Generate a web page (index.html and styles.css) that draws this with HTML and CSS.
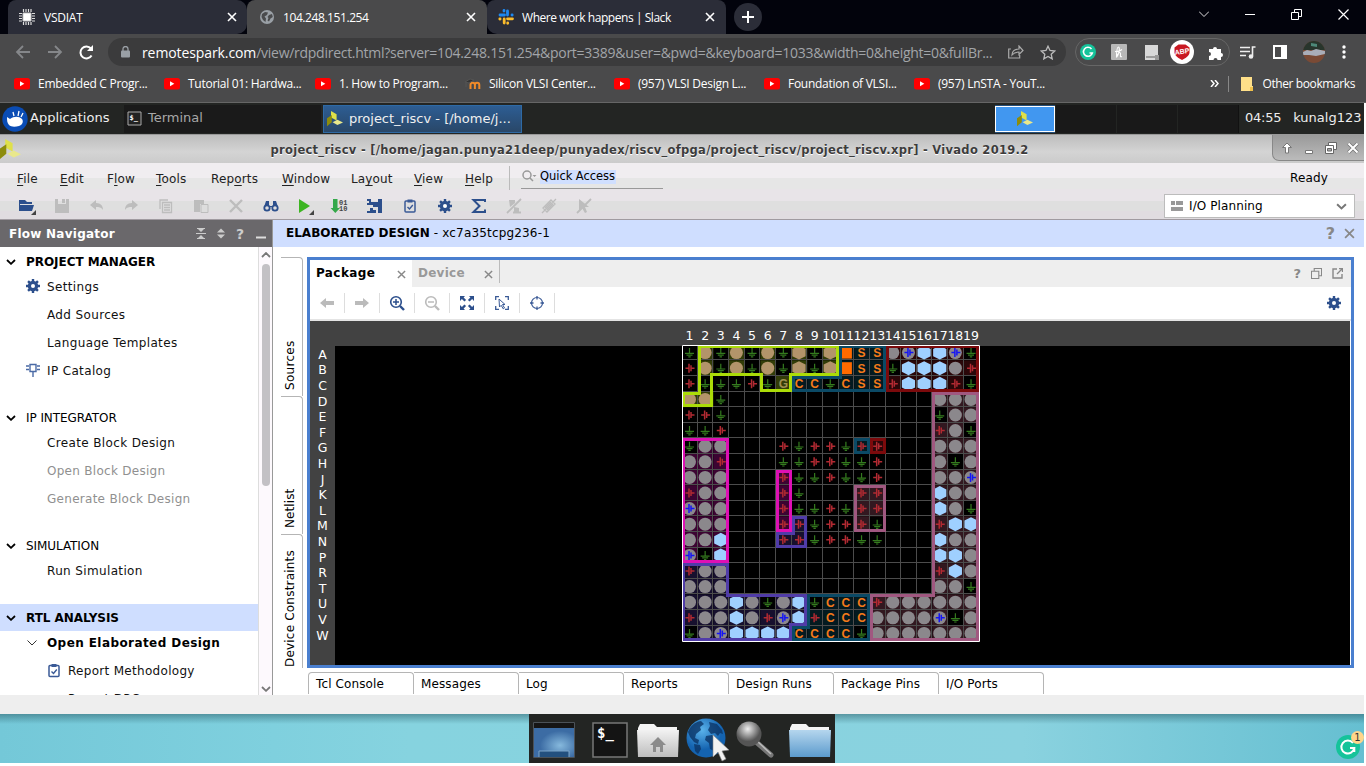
FILE: index.html
```html
<!DOCTYPE html>
<html lang="en">
<head>
<meta charset="utf-8">
<title>104.248.151.254</title>
<link rel="stylesheet" href="styles.css">
</head>
<body>
<svg class="defs" width="0" height="0">
  <symbol id="yt" viewBox="0 0 16 12"><rect width="16" height="11.5" rx="2.5" fill="#f00"/><path d="M6 3.3v5l4.3-2.5z" fill="#fff"/></symbol>
  <symbol id="x" viewBox="0 0 10 10"><path d="M1 1l8 8M9 1L1 9" fill="none" stroke="currentColor" stroke-width="1.6"/></symbol>
  <symbol id="gear" viewBox="0 0 14 14"><path d="M5.8 0h2.4v14H5.8zM0 5.8h14v2.4H0z" fill="#2c4f8c"/><path d="M5.8 0h2.4v14H5.8zM0 5.8h14v2.4H0z" fill="#2c4f8c" transform="rotate(45 7 7)"/><circle cx="7" cy="7" r="3.6" fill="none" stroke="#2c4f8c" stroke-width="3.2"/><circle cx="7" cy="7" r="2" fill="#fff"/></symbol>
  <symbol id="clip" viewBox="0 0 12 15"><rect x="1" y="2.5" width="10" height="11" rx="1" fill="none" stroke="#3a5a96" stroke-width="1.5"/><path d="M3.5 1h5v3h-5z" fill="#3a5a96"/><path d="M3.5 8.5l2 2 3.3-4" fill="none" stroke="#3a5a96" stroke-width="1.4"/></symbol>
  <symbol id="viv" viewBox="0 0 20 20"><path d="M5 0l7 4v8L5 8z" fill="#dfe04a"/><path d="M0 9l6-4v9l-6 5z" fill="#8d8c0c"/><path d="M7 14l6-3 7 3.5-7 3z" fill="#e9e88c"/></symbol>
  <symbol id="chev" viewBox="0 0 10 6"><path d="M1 1l4 3.8L9 1" fill="none" stroke="currentColor" stroke-width="1.8"/></symbol>
  <symbol id="win" viewBox="0 0 12 12"><path d="M3.5 3.5v-3h8v8h-3M.5 3.5h8v8h-8z" fill="none" stroke="currentColor" stroke-width="1.2"/></symbol>
  <symbol id="lens" viewBox="0 0 16 16"><circle cx="7" cy="7" r="5.3" fill="none" stroke="currentColor" stroke-width="1.6"/><path d="M11 11l4 4" stroke="currentColor" stroke-width="2.4"/></symbol>
  <symbol id="arrow" viewBox="0 0 14 10"><path d="M0 5l6-5v3h8v4H6v3z" fill="currentColor"/></symbol>
</svg>

<header class="tabs">
  <div class="tab first"><svg width="16" height="16" viewBox="0 0 16 16"><path d="M4 4h8v8H4z" fill="#fff" stroke="#ccc"/><path d="M4.5 0v3M7 0v3M9.5 0v3M12 0v3M4.5 13v3M7 13v3M9.5 13v3M12 13v3M0 4.5h3M0 7h3M0 9.5h3M0 12h3M13 4.5h3M13 7h3M13 9.5h3M13 12h3" stroke="#ddd" stroke-width="1.2"/></svg><span>VSDIAT</span><svg class="close" width="10" height="10"><use href="#x"/></svg></div>
  <div class="tab active"><svg width="14" height="14" viewBox="0 0 14 14"><circle cx="7" cy="7" r="7" fill="#9aa0a6"/><path d="M2 4l3-2 3 .5L7 5 4.500 6.500 6 8.500 5.500 12 3 10 1.500 7zM9 5l3-1 .8 3-2.300 1.500-1.500 3-1.500-1L8.500 8 7.500 7z" fill="#4a4b4d"/></svg><span>104.248.151.254</span><svg class="close" width="10" height="10"><use href="#x"/></svg></div>
  <div class="tab last"><svg width="16" height="16" viewBox="0 0 16 16" stroke-width="2.800" stroke-linecap="round"><path d="M6 1.500v.5M2 6h4.500M9.500 2v4M14 6h.2" stroke="#1e88f0"/><path d="M9.500 9.800h5M6.200 10v4M9.700 14v.3M1.800 10h.3" stroke="#fbbc2c"/></svg><span>Where work happens | Slack</span><svg class="close" width="10" height="10"><use href="#x"/></svg></div>
  <div class="plus"><svg width="12" height="12"><path d="M6 0v12M0 6h12" stroke="#fff" stroke-width="2"/></svg></div>
  <div class="wbtns">
    <svg width="10" height="6" viewBox="0 0 10 6"><path d="M0 .5l5 5 5-5" fill="none" stroke="#ddd"/></svg>
    <svg width="10" height="10"><path d="M0 5.500h10" stroke="#fff"/></svg>
    <svg width="11" height="11"><path d="M3.500 3V.5h7v7H8M.5 3.500h7v7h-7z" fill="none" stroke="#fff"/></svg>
    <svg width="11" height="11"><path d="M.5.5l10 10M10.500 .5l-10 10" stroke="#fff" stroke-width="1.200"/></svg>
  </div>
</header>

<div class="urlbar">
  <div class="nav">
    <svg width="16" height="14" viewBox="0 0 16 14"><path d="M15 7H2M8 1L2 7l6 6" fill="none" stroke="#85878a" stroke-width="1.8"/></svg>
    <svg width="16" height="14" viewBox="0 0 16 14"><path d="M1 7h13M8 1l6 6-6 6" fill="none" stroke="#85878a" stroke-width="1.8"/></svg>
    <svg width="15" height="15" viewBox="0 0 15 15"><path d="M12.600 10.500A6 6 0 1 1 12 3.500" fill="none" stroke="#fff" stroke-width="2"/><path d="M14 0v6H8z" fill="#fff"/></svg>
  </div>
  <div class="omni">
    <svg width="9" height="12" viewBox="0 0 9 12"><rect y="4.500" width="9" height="7" rx="1" fill="#9aa0a6"/><path d="M2 5V3a2.500 2.500 0 0 1 5 0v2" fill="none" stroke="#9aa0a6" stroke-width="1.300"/></svg>
    <p class="url"><b>remotespark.com</b>/view/rdpdirect.html?server=104.248.151.254&amp;port=3389&amp;user=&amp;pwd=&amp;keyboard=1033&amp;width=0&amp;height=0&amp;fullBr...</p>
    <svg class="share" width="16" height="14" viewBox="0 0 16 14"><path d="M3 4H.7v9h11v-3M4 10c0-4 3-6 7-6V1l4 4.500-4 4V7c-3 0-5 .5-7 3z" fill="none" stroke="#aaa" stroke-width="1.200"/></svg>
    <svg class="star" width="16" height="15" viewBox="0 0 16 15"><path d="M8 1.200l2 4.300 4.700.5-3.500 3.200 1 4.700L8 11.500l-4.200 2.400 1-4.700L1.300 6 6 5.500z" fill="none" stroke="#bbb" stroke-width="1.300"/></svg>
  </div>
  <div class="exts">
    <svg width="16" height="16" viewBox="0 0 16 16"><circle cx="8" cy="8" r="8" fill="#15c39a"/><path d="M11.500 5A4.500 4.500 0 1 0 12.300 9H9.500" fill="none" stroke="#fff" stroke-width="1.600"/></svg>
    <svg width="16" height="16" viewBox="0 0 16 16"><rect width="16" height="16" rx="1" fill="#b8b8b8"/><path d="M5.500 13.500c3-4 3.500-10.500 2-10.500S5.500 8 5.500 13.500c1-4.500 4-6.500 4-3.500 0 2-.5 3.500 1.500 2.500M4 7.500c3 .5 5-.5 7-2" fill="none" stroke="#fff" stroke-width="1.100"/></svg>
    <svg class="page" width="14" height="15" viewBox="0 0 14 15"><path d="M0 0h13v15H0z" fill="#d8d8d8"/><path d="M1 12h9" stroke="#888" stroke-width="1.500"/><path d="M10 10h4v5h-4z" fill="#999"/></svg>
    <svg width="24" height="24" viewBox="0 0 24 24"><circle cx="12" cy="12" r="12" fill="#fff"/><path d="M8.500 4.500h7l4 3v5c0 3-4 6-7.500 7.500-3.500-1.500-7.500-4.500-7.500-7.500v-5z" fill="#c91822"/><text x="12" y="14" text-anchor="middle" class="abp" transform="rotate(-8 12 12)">ABP</text></svg>
    <svg width="15" height="15" viewBox="0 0 15 15"><path d="M0 4h4a2 2 0 1 1 4 0h4v4a2 2 0 1 1 0 4v3H8.500a2 2 0 1 0-4 0H0v-4a2 2 0 1 0 0-4z" fill="#fff"/></svg>
  </div>
  <div class="rtools">
    <svg width="16" height="13" viewBox="0 0 16 13"><path d="M0 1.500h10M0 5.500h10M0 9.500h6M12.500 10V1h3" fill="none" stroke="#eee" stroke-width="1.600"/><circle cx="11" cy="10.500" r="2.300" fill="#eee"/></svg>
    <svg width="14" height="14"><path d="M1 1h12v12H1z" fill="none" stroke="#fff" stroke-width="2"/><path d="M8 1h5v12H8z" fill="#fff"/></svg>
    <svg width="22" height="22" viewBox="0 0 22 22"><clipPath id="av"><circle cx="11" cy="11" r="11"/></clipPath><g clip-path="url(#av)"><path d="M0 0h22v22H0z" fill="#7a4a35"/><path d="M0 0h22v9H0z" fill="#28352c"/><path d="M0 11l4-2 4 1 5-2 9 2v3l-9 2-7-1H0z" fill="#a9adb8"/><path d="M8 2l6 1v3l-6-1z" fill="#4d8878"/></g></svg>
    <svg width="4" height="14"><circle cx="2" cy="2" r="1.700" fill="#fff"/><circle cx="2" cy="7" r="1.700" fill="#fff"/><circle cx="2" cy="12" r="1.700" fill="#fff"/></svg>
  </div>
</div>

<nav class="marks">
  <a class="m1"><svg width="16" height="12"><use href="#yt"/></svg>Embedded C Progr...</a>
  <a class="m2"><svg width="16" height="12"><use href="#yt"/></svg>Tutorial 01: Hardwa...</a>
  <a class="m2"><svg width="16" height="12"><use href="#yt"/></svg>1. How to Program...</a>
  <a class="m3"><svg width="16" height="12" viewBox="0 0 16 12"><path d="M5.500 11V7a2.200 2.200 0 0 1 4.400 0v4V7a2.200 2.200 0 0 1 4.400 0v4" fill="none" stroke="#f08a28" stroke-width="2"/><path d="M0 4l5-3 4 1-5 3zM1 5v4" fill="#333" stroke="#555"/></svg>Silicon VLSI Center...</a>
  <a class="m4"><svg width="16" height="12"><use href="#yt"/></svg>(957) VLSI Design L...</a>
  <a class="m4"><svg width="16" height="12"><use href="#yt"/></svg>Foundation of VLSI...</a>
  <a><svg width="16" height="12"><use href="#yt"/></svg>(957) LnSTA - YouT...</a>
  <div class="other"><svg width="9" height="7" viewBox="0 0 9 7"><path d="M1 0l3 3.500L1 7M5 0l3 3.500L5 7" fill="none" stroke="#fff" stroke-width="1.500"/></svg><i></i><svg class="fold" width="12" height="14"><path d="M0 0h11v9h1v5H0z" fill="#ffe089"/><path d="M9 14v-4h3v4z" fill="#f2c24a"/></svg>Other bookmarks</div>
</nav>

<div class="remote">
  <div class="xfce">
    <div class="apps"><svg width="26" height="26" viewBox="0 0 26 26"><circle cx="13" cy="13" r="12.700" fill="#0a4cb4"/><path d="M5 11l3 2c4-3 9-3 12 0 2 3 0 6-3 7-4 1-8 1-10-1-2-2-2-5-2-8z" fill="#fff"/><path d="M12 10l-1-4M16 10l1-5M19 11l2-4" stroke="#fff" stroke-width="1.300"/></svg><span>Applications</span></div>
    <div class="task"><svg width="15" height="15"><path d="M1 1h13v13H1z" fill="#222" stroke="#aaa"/><text x="2.500" y="8.500" class="prompt">$_</text></svg><span>Terminal</span></div>
    <div class="task on"><svg width="16" height="16"><use href="#viv"/></svg>project_riscv - [/home/j...</div>
    <div class="pager"><b><svg width="16" height="16"><use href="#viv"/></svg></b><i></i><i></i><i></i></div>
    <time>04:55</time><span class="user">kunalg123</span>
  </div>

  <div class="title">
    <svg class="logo" width="21" height="21"><use href="#viv"/></svg>
    <h1>project_riscv - [/home/jagan.punya21deep/punyadex/riscv_ofpga/project_riscv/project_riscv.xpr] - Vivado 2019.2</h1>
    <div class="wm">
      <svg width="12" height="12" viewBox="0 0 12 12"><path d="M6 1l4.500 4.500h-3V11h-3V5.500h-3z" fill="#fff" stroke="#777"/></svg>
      <svg width="12" height="12"><path d="M2.500 8.500h7v3h-7z" fill="#fff" stroke="#777"/></svg>
      <svg width="12" height="12"><path d="M3.500 .5h8v7h-8z" fill="#fff" stroke="#666"/><path d="M.5 3.500h8v8h-8z" fill="#fff" stroke="#666"/><path d="M2.500 6.500h4v2.500h-4z" fill="#aaa" stroke="#666"/></svg>
      <svg width="12" height="12"><path d="M1.500 1.500l9 9M10.500 1.500l-9 9" stroke="#777" stroke-width="3.600"/><path d="M1.500 1.500l9 9M10.500 1.500l-9 9" stroke="#fff" stroke-width="2"/></svg>
    </div>
  </div>

  <div class="chrome">
    <div class="menu">
      <span class="w43"><u>F</u>ile</span><span class="w47"><u>E</u>dit</span><span class="w49">F<u>l</u>ow</span><span class="w55"><u>T</u>ools</span><span class="w71">Rep<u>o</u>rts</span><span class="w69"><u>W</u>indow</span><span class="w63">La<u>y</u>out</span><span class="w51"><u>V</u>iew</span><span class="w44"><u>H</u>elp</span>
      <div class="quick"><svg width="15" height="12" viewBox="0 0 15 12"><circle cx="5" cy="5" r="4" fill="none" stroke="#999" stroke-width="1.500"/><path d="M8 8l3 3" stroke="#999" stroke-width="1.500"/><path d="M10.500 5h4l-2 2z" fill="#999"/></svg><span>Quick Access</span></div>
      <span class="ready">Ready</span>
    </div>
    <div class="tools">
      <svg viewBox="0 0 20 20"><path d="M3 4h5l2 2h5v2H3zM3 9h14l-2 6H3z" fill="#2c4f8c"/><path d="M2.500 4v11" stroke="#2c4f8c"/><path d="M19 14v5h-5z" fill="#444"/></svg>
      <svg class="dim" viewBox="0 0 20 20"><path d="M3 3h3v5h8V3h3v14H3z" fill="currentColor"/><path d="M10 3h3v4h-3z" fill="currentColor"/></svg>
      <svg class="dim" viewBox="0 0 20 20"><path d="M3 9l6-5v3c5 0 7 3 7 7-2-3-4-3-7-3v3z" fill="currentColor"/></svg>
      <svg class="dim" viewBox="0 0 20 20"><path d="M17 9l-6-5v3c-5 0-7 3-7 7 2-3 4-3 7-3v3z" fill="currentColor"/></svg>
      <svg class="dim" viewBox="0 0 20 20"><path d="M4 13V4h8M6.500 6.500h9v10h-9zM8 9h6M8 11.500h6M8 14h6" fill="none" stroke="currentColor" stroke-width="1.300"/></svg>
      <svg class="dim" viewBox="0 0 20 20"><path d="M3 4h10v4H9v8H3z" fill="currentColor"/><path d="M10 8.500h7v8h-7z" fill="#ddd" stroke="currentColor"/></svg>
      <svg class="dim" viewBox="0 0 20 20"><path d="M4 4l12 12M16 4L4 16" stroke="currentColor" stroke-width="2.400"/></svg>
      <svg viewBox="0 0 20 20"><path d="M5 5h3v5h4V5h3l2 6H3z" fill="#2c4f8c"/><circle cx="6" cy="12" r="2.700" fill="#ddd" stroke="#2c4f8c" stroke-width="1.800"/><circle cx="14" cy="12" r="2.700" fill="#ddd" stroke="#2c4f8c" stroke-width="1.800"/></svg>
      <svg viewBox="0 0 20 20"><path d="M4 3l11 7-11 7z" fill="#3cb521"/><path d="M19 14v5h-5z" fill="#444"/></svg>
      <svg viewBox="0 0 20 20"><path d="M3 3h4.500v9H10l-4.700 5L.6 12H3z" fill="#35a84a"/><text x="9" y="8.500" class="bits">01</text><text x="9" y="15" class="bits">10</text></svg>
      <svg viewBox="0 0 20 20"><path d="M2 3h4v3h7V3h4v14h-4v-6H8v3h3v3H2v-2h3v-3h3V9H2V7h2V5H2z" fill="#2c4f8c"/></svg>
      <svg viewBox="-3 -2.500 18 20"><use href="#clip" width="12" height="15"/></svg>
      <svg viewBox="-3 -3 20 20"><use href="#gear" width="14" height="14"/></svg>
      <svg viewBox="0 0 20 20"><path d="M16 6V4H4.500l6 6-6 6H16v-2.500" fill="none" stroke="#2c4f8c" stroke-width="2"/></svg>
      <svg class="dim" viewBox="0 0 20 20"><path d="M5 4h6v3l-5 4zM10 11l5 1v4h-5zM3 16.500h14" fill="currentColor"/><path d="M3 17L17 3M9 16.500h8" stroke="currentColor" stroke-width="1.800"/></svg>
      <svg class="dim" viewBox="0 0 20 20"><path d="M4 12l8-8 4 4-8 8zM6 12l6-6M8 14l6-6M3 17L17 3" fill="none" stroke="currentColor" stroke-width="1.300"/></svg>
      <svg class="dim" viewBox="0 0 20 20"><path d="M5 3v12l3-3 3 5 2-1-2-5h4z" fill="currentColor"/><path d="M3 17L17 3" stroke="currentColor" stroke-width="1.800"/></svg>
      <div class="combo"><svg width="12" height="10"><path d="M0 0h4v4H0zM5 0h7v4H5zM0 6h12v4H0z" fill="#999"/></svg><span>I/O Planning</span><svg class="cv" width="11" height="7"><use href="#chev"/></svg></div>
    </div>
  </div>

  <main class="work">
    <aside class="flow">
      <div class="flowhead"><span>Flow Navigator</span>
        <svg width="10" height="11"><path d="M0 5.500h10M1 .5h8M1 10.500h8" stroke="#ccc"/><path d="M2 1h6L5 4zM2 10h6L5 7z" fill="#ccc"/></svg>
        <svg width="10" height="11"><path d="M1 4.500h8L5 .5zM1 6.500h8l-4 4z" fill="#ccc"/></svg>
        <b>?</b>
        <svg width="11" height="11"><path d="M0 9.500h10" stroke="#ddd" stroke-width="2"/></svg></div>
      <div class="flowbody">
        <div class="tree">
          <h2><svg width="10" height="6"><use href="#chev"/></svg>PROJECT MANAGER</h2>
          <p><svg width="14" height="14"><use href="#gear"/></svg>Settings</p>
          <p>Add Sources</p>
          <p>Language Templates</p>
          <p><svg width="14" height="14" viewBox="0 0 14 14"><path d="M4 1.500h6v7H4zM0 3h3M0 6.500h3M11 3h3M11 6.500h3M7 9v5" fill="none" stroke="#4a6aa5" stroke-width="1.400"/></svg>IP Catalog</p>
          <h2 class="thin"><svg width="10" height="6"><use href="#chev"/></svg>IP INTEGRATOR</h2>
          <p>Create Block Design</p>
          <p class="off">Open Block Design</p>
          <p class="off">Generate Block Design</p>
          <h2 class="thin"><svg width="10" height="6"><use href="#chev"/></svg>SIMULATION</h2>
          <p>Run Simulation</p>
          <h2 class="sel"><svg width="10" height="6"><use href="#chev"/></svg>RTL ANALYSIS</h2>
          <p class="open"><svg width="10" height="6" viewBox="0 0 10 6"><path d="M.5.5L5 5 9.500.5" fill="none" stroke="#333"/></svg>Open Elaborated Design</p>
          <p class="sub"><svg width="12" height="15"><use href="#clip"/></svg>Report Methodology</p>
          <p class="sub">Report DRC</p>
        </div>
        <div class="scroll"><svg width="10" height="6" viewBox="0 0 10 6"><path d="M1 5l4-4 4 4" fill="none" stroke="#777" stroke-width="1.800"/></svg><i></i><svg width="10" height="6"><use href="#chev"/></svg></div>
      </div>
    </aside>

    <section class="design">
      <div class="dhead"><b>ELABORATED DESIGN</b><span>- xc7a35tcpg236-1</span><em>?</em><svg width="11" height="11"><use href="#x"/></svg></div>
      <div class="dbody">
        <div class="vtabs"><span class="v1">Sources</span><span class="v2">Netlist</span><span class="v3">Device Constraints</span></div>
        <div class="col">
          <div class="panel">
            <div class="ptabs"><div class="pt on">Package<svg width="9" height="9"><use href="#x"/></svg></div><div class="pt">Device<svg width="9" height="9"><use href="#x"/></svg></div>
              <div class="pbtn"><em>?</em><svg width="11" height="11"><use href="#win"/></svg><svg width="11" height="11" viewBox="0 0 11 11"><path d="M5 1H1v9h9V6" fill="none" stroke="#888" stroke-width="1.400"/><path d="M5 6l5-5M7 .7h3.500V4" fill="none" stroke="#888" stroke-width="1.300"/></svg></div></div>
            <div class="ptools">
              <span class="dim"><svg width="14" height="10"><use href="#arrow"/></svg></span>
              <span class="dim flip"><svg width="14" height="10"><use href="#arrow"/></svg></span>
              <span><svg width="16" height="16" viewBox="0 0 16 16"><use href="#lens"/><path d="M7 4v6M4 7h6" stroke="#2c4f8c" stroke-width="1.500"/></svg></span>
              <span class="dim"><svg width="16" height="16" viewBox="0 0 16 16"><use href="#lens"/><path d="M4 7h6" stroke="#bbb" stroke-width="1.500"/></svg></span>
              <span><svg width="14" height="14" viewBox="0 0 14 14"><path d="M0 0h5L3.600 1.400l2.500 2.500-1.700 1.700L1.900 3.100 0 5zM14 0v5l-1.900-1.900-2.500 2.500L7.900 3.900l2.500-2.500L9 0zM0 14V9l1.900 1.900 2.500-2.500 1.700 1.700-2.500 2.500L5 14zM14 14H9l1.400-1.400-2.500-2.500 1.700-1.700 2.500 2.500L14 9z" fill="#2c4f8c"/></svg></span>
              <span><svg width="14" height="14" viewBox="0 0 14 14"><path d="M.7 4V.7H4M10 .7h3.300V4M13.300 10v3.300H10M4 13.300H.7V10" fill="none" stroke="#3a5a96" stroke-width="1.300"/><path d="M4 3l6 5.500H7.500l2 3.500-1.300.8-2-3.500L4.500 11z" fill="none" stroke="#3a5a96"/></svg></span>
              <span><svg width="14" height="14" viewBox="0 0 14 14"><circle cx="7" cy="7" r="5.500" fill="none" stroke="#3a5a96" stroke-width="1.200"/><path d="M7 0v3.500M7 10.500V14M0 7h3.500M10.500 7H14" stroke="#3a5a96" stroke-width="1.300"/></svg></span>
              <svg class="pgear" width="14" height="14"><use href="#gear"/></svg>
            </div>
            <svg id="chip" class="chip" width="1040" height="344" viewBox="310 321 1040 344"></svg>
          </div>
          <div class="btabs"><span>Tcl Console</span><span>Messages</span><span>Log</span><span>Reports</span><span>Design Runs</span><span>Package Pins</span><span>I/O Ports</span></div>
        </div>
      </div>
    </section>
  </main>
  <div class="status"></div>

  <footer class="desk">
    <div class="dock">
      <svg width="42" height="36" viewBox="0 0 42 36"><defs><radialGradient id="scr" cx=".65" cy=".6"><stop offset="0" stop-color="#86b9dd"/><stop offset="1" stop-color="#3c6ca4"/></radialGradient><linearGradient id="fb" x2="0" y2="1"><stop offset="0" stop-color="#b5d6ee"/><stop offset="1" stop-color="#5c9bcd"/></linearGradient><linearGradient id="fg" x2="0" y2="1"><stop offset="0" stop-color="#f2f2f2"/><stop offset="1" stop-color="#bdbdbd"/></linearGradient><radialGradient id="gl" cx=".4" cy=".3"><stop offset="0" stop-color="#5ab2ea"/><stop offset="1" stop-color="#1463b0"/></radialGradient><radialGradient id="ball" cx=".45" cy=".3"><stop offset="0" stop-color="#eee"/><stop offset="1" stop-color="#555"/></radialGradient></defs><path d="M.5.5h41v35H.5z" fill="#151515" stroke="#4b5258"/><path d="M1 6h40v29H1z" fill="url(#scr)"/><path d="M6 35v-6h30v6" fill="#23507e" stroke="#7fa6c8"/></svg>
      <svg width="36" height="36" viewBox="0 0 36 36"><path d="M1 1h34v34H1z" fill="#141414" stroke="#777" stroke-width="1.500"/><text x="5" y="16" class="prompt big">$_</text></svg>
      <svg width="42" height="36" viewBox="0 0 42 36"><path d="M1 6l2-4h14l3 3h20v30H1z" fill="#f4f4f4"/><path d="M0 8h42l-1 27H1z" fill="url(#fg)"/><path d="M21 15l8 8h-3v7h-3v-5h-4v5h-3v-7h-3z" fill="#8b8b8b"/></svg>
      <svg width="44" height="44" viewBox="0 0 44 44"><circle cx="20" cy="20" r="19.500" fill="url(#gl)"/><path d="M2 14c2-5 6-10 13-11l3 3-4 3 1 3-5 4-1 4 4 2-1 4-4-2-4-5zM8 26l6 1 1 4-3 5-3-3zM23 4l8 2 5 6 1 4-3-1-2 3-3-3-4 1-3-4 2-4zM20 18l6-1 5 4 1 4-4 8-4-2-1-6-4-3z" fill="#0b3566" opacity=".8"/><path d="M27 17v22l5-5 4 9 4-2-4-8 7-1z" fill="#f2f2f2" stroke="#888" stroke-width=".6"/></svg>
      <svg width="40" height="38" viewBox="0 0 40 38"><path d="M20 20l16 14" stroke="#777" stroke-width="5" stroke-linecap="round"/><path d="M21 19l15 14" stroke="#bbb" stroke-width="1.500"/><circle cx="14" cy="13" r="12.500" fill="url(#ball)"/></svg>
      <svg width="42" height="36" viewBox="0 0 42 36"><path d="M1 6l2-4h14l3 3h20v30H1z" fill="#f4f4f4"/><path d="M0 8h42l-1 27H1z" fill="url(#fb)"/></svg>
    </div>
    <div class="gram"><svg width="24" height="24" viewBox="0 0 24 24"><circle cx="12" cy="12" r="12" fill="#15c39a"/><path d="M17 8A6.500 6.500 0 1 0 18.300 13H14M18.300 13v4" fill="none" stroke="#fff" stroke-width="2"/></svg><i>1</i></div>
  </footer>
</div>
<script src="chip.js"></script>
</body>
</html>
```
FILE: styles.css
```css
* { box-sizing: border-box; }
body { margin: 0; width: 1366px; height: 766px; overflow: hidden; background: #fff; font: 12px "DejaVu Sans", sans-serif; }
svg { flex: none; }
.defs { position: absolute; }
p, h1, h2 { margin: 0; }
span, p, h1, h2, a { white-space: nowrap; }

/* browser window */
.tabs { display: flex; height: 34px; padding-left: 8px; background: #02030c; color: #fff; font: 12px "Open Sans", sans-serif; }
.tab { display: flex; align-items: center; height: 34px; width: 240px; padding: 0 11px; background: #2b2d38; border-radius: 8px 8px 0 0; letter-spacing: -.25px; }
.tab.first { width: 239px; padding-right: 10px; border-radius: 8px 10px 10px 0; }
.tab.active { background: #4a4a4b; padding-left: 13px; }
.tab.last { width: 239px; border-radius: 8px 8px 0 10px; letter-spacing: -.45px; }
.tab span { margin-left: 9px; }
.tab.last span { margin-left: 8px; }
.tab.active span { letter-spacing: -.42px; }
.close { margin-left: auto; }
.plus { display: flex; align-items: center; justify-content: center; width: 28px; height: 28px; border-radius: 50%; background: #2b2d38; margin: 3px 0 0 8px; }
.wbtns { display: flex; align-items: center; margin-left: auto; gap: 36px; height: 28px; padding-right: 17px; }
.urlbar { display: flex; align-items: center; height: 35px; padding-top: 1px; background: #4a4a4b; }
.nav { display: flex; align-items: center; gap: 16px; padding-left: 15px; width: 108px; }
.omni { display: flex; align-items: center; width: 958px; height: 28px; padding: 0 10px 0 13px; border-radius: 14px; background: #3b3b3c; }
.url { width: 866px; padding-left: 12px; color: #a2a5a9; font: 14px "Open Sans", sans-serif; letter-spacing: -.27px; }
.url b { font-weight: 400; color: #fff; letter-spacing: -.1px; }
.star { margin-left: 16px; }
.share { margin-left: 12px; }
.exts { display: flex; align-items: center; justify-content: space-between; width: 155px; height: 28px; margin-left: 9px; padding: 0 5px 0 4px; border: 1px solid #666; border-radius: 14px; }
.exts .page { margin: 0 -3px 0 3px; }
.abp { font: bold 7px "Liberation Sans", sans-serif; fill: #fff; }
.rtools { display: flex; align-items: center; justify-content: space-between; width: 106px; margin-left: 10px; }
.marks { display: flex; align-items: center; height: 34px; padding: 0 11px 4px 14px; border-bottom: 1px solid #666; background: #4a4a4b; color: #fff; font: 12px "Open Sans", sans-serif; letter-spacing: -.27px; }
.marks a { display: flex; align-items: center; gap: 8px; width: 150px; }
.marks .m2 { width: 151px; }
.marks .m3 { width: 148px; margin-left: -1px; margin-right: 1px; }
.other { display: flex; align-items: center; margin-left: auto; letter-spacing: -.4px; }
.other i { width: 1px; height: 16px; margin: 0 12px 0 9px; background: #888; }
.fold { margin-right: 9px; }

/* remote desktop */
.remote { width: 1364px; }
.xfce { display: flex; align-items: center; height: 31px; background: #232523; color: #eee; font-size: 13px; }
.apps { display: flex; align-items: center; gap: 2px; width: 124px; padding-left: 2px; height: 29px; }
.apps span, .task span { padding-bottom: 2px; }
.task { display: flex; align-items: center; gap: 6px; height: 28px; width: 197px; padding-left: 3px; background: #1a1a1a; color: #a8a8a8; }
.task.on { width: 199px; margin-left: 2px; gap: 6px; padding-left: 3px; border: 1px solid #2e6aa5; background: linear-gradient(#2d5d93, #294768); color: #f0f0f0; }
.prompt { font: bold 7px "DejaVu Sans Mono", monospace; fill: #fff; }
.prompt.big { font-size: 14px; }
.pager { display: flex; gap: 1px; margin-left: 473px; height: 28px; border-right: 1px solid #111; background: linear-gradient(#254e78, #254e78) 0 0 / 60px 28px no-repeat; }
.pager b { display: flex; align-items: center; justify-content: center; width: 60px; height: 26px; margin-top: 1px; border: 1px solid #fff; background: #4197f0; }
.pager i { width: 60px; background: #191919; }
.pager + time { margin-left: 6px; padding-bottom: 2px; letter-spacing: -.25px; }
.user { margin-left: 12px; padding-bottom: 2px; }
.title { display: flex; align-items: center; justify-content: center; position: relative; height: 29px; padding-top: 2px; border-top: 1px solid #999; background: linear-gradient(#bdbdbd, #d4d4d4 60%, #cbcbcb); }
.title h1 { margin-right: 65px; font-size: 11.500px; letter-spacing: .285px; color: #3c3c3c; text-shadow: 0 1px #fff; }
.logo { position: absolute; left: 0; top: 4px; }
.wm { position: absolute; right: 0; top: 0; display: flex; align-items: center; gap: 10px; width: 92px; height: 26px; padding-left: 8px; border: 1px solid #888; border-width: 0 0 1px 1px; border-radius: 0 0 0 7px; background: linear-gradient(#999, #bbb); }
.chrome { height: 57px; border-bottom: 1px solid #a09aa0; background: linear-gradient(#f0edf0 0 15px, #e6e6e6 15px 26px, #e8e4e8 26px 38px, #dfdfdf 38px 48px, #e0dce0 48px); }
.menu { display: flex; height: 30px; padding: 2px 0 0 17px; align-items: center; color: #222; letter-spacing: .15px; }
.menu u { text-underline-offset: 2px; }
.w43 { width: 43px; } .w47 { width: 47px; } .w49 { width: 49px; } .w55 { width: 55px; } .w71 { width: 71px; } .w69 { width: 69px; } .w63 { width: 63px; } .w51 { width: 51px; } .w44 { width: 44px; }
.quick { display: flex; align-items: center; width: 154px; padding-left: 12px; height: 24px; margin-top: -3px; border-left: 1px solid #bbb; color: #000; font-size: 11.500px; letter-spacing: -.05px; }
.quick svg { margin-bottom: 3px; }
.quick span { display: flex; flex: none; align-items: center; width: 142px; height: 22px; margin-left: -16px; padding: 0 0 3px 19px; border-bottom: 1px solid #999; background: linear-gradient(#d0dfff, #d0dfff) 19px 3px / 76px 14px no-repeat; }
.ready { margin-left: 627px; margin-top: -2px; color: #000; }
.tools { display: flex; height: 26px; padding-left: 17px; align-items: center; }
.tools > svg { width: 20px; height: 20px; margin-right: 14.800px; overflow: visible; }
.dim { color: #bdbdbd; }
.bits { font: bold 7px "Liberation Mono", monospace; fill: #444; }
.combo { display: flex; align-items: center; width: 191px; height: 24px; margin-left: auto; margin-right: 9px; padding: 0 7px 0 6px; border: 1px solid #bcbcbc; background: #fff; letter-spacing: .1px; }
.combo span { margin-left: 6px; }
.cv { margin-left: auto; color: #777; }

.work { display: flex; height: 475px; background: #fff; }
.flow { width: 273px; border-right: 1px solid #999; }
.flowhead { display: flex; align-items: center; height: 27px; padding: 0 5px 0 9px; background: #6a686b; color: #fff; font-weight: bold; letter-spacing: .25px; }
.flowhead span { width: 187px; flex: none; }
.flowhead svg { margin-right: 10px; }
.flowhead svg:last-child { margin: 0 0 0 12px; }
.flowhead b { color: #ccc; font-size: 14px; }
.flowbody { display: flex; height: 448px; overflow: hidden; }
.tree { width: 258px; padding-top: 1px; letter-spacing: .36px; color: #111; }
.tree h2 { display: flex; align-items: center; height: 27px; margin: 20px 0 -3px; padding-left: 6px; gap: 10px; font-size: 12px; letter-spacing: -.05px; color: #000; }
.tree h2:first-child { margin-top: 0; }
.tree h2.thin { font-weight: 400; letter-spacing: -.07px; }
.tree h2.sel { background: #cfdeff; }
.tree p { position: relative; height: 28px; line-height: 30px; padding-left: 47px; }
.tree p svg { position: absolute; left: 26px; top: 7px; }
.tree .off { color: #909090; letter-spacing: .28px; }
.tree .open { font-weight: bold; letter-spacing: .42px; color: #000; }
.tree .open svg { left: 27px; top: 12px; }
.tree .sub { padding-left: 68px; letter-spacing: .3px; }
.tree .sub svg { left: 48px; }
.scroll { display: flex; flex-direction: column; align-items: center; width: 14px; padding: 5px 0 3px; border-left: 1px solid #ddd; background: #fdf9fd; color: #777; }
.scroll i { width: 8px; height: 222px; margin: 6px 0 auto; border-radius: 4px; background: #c3c1c5; }

.design { width: 1091px; }
.dhead { display: flex; align-items: center; height: 27px; padding: 0 9px 1px 13px; background: #cfdeff; color: #000; }
.dhead span { margin-left: 4px; letter-spacing: .17px; }
.dhead em { margin: 0 9px 0 auto; font: bold 16px "DejaVu Sans", sans-serif; color: #888; }
.dhead svg { color: #888; }
.dbody { display: flex; padding: 10px 10px 0 8px; }
.vtabs { width: 22px; margin-right: 4px; padding-top: 0; }
.vtabs span { display: block; writing-mode: vertical-rl; transform: rotate(180deg); width: 22px; line-height: 22px; padding-left: 3px; border-left: 1px solid #b5b5b5; border-bottom: 1px solid #b5b5b5; border-radius: 0 0 0 4px; letter-spacing: .1px; padding-top: 6px; }
.vtabs .v1, .vtabs .v2, .vtabs .v3 { line-height: 18px; }
.vtabs .v1 { height: 139px; padding-top: 6px; letter-spacing: .3px; }
.v2 { height: 138px; }
.vtabs .v3 { height: 134px; padding-top: 1px; letter-spacing: .2px; }
.panel { width: 1047px; height: 411px; border: 3px solid #4a7fcf; }
.ptabs { display: flex; height: 27px; background: #eee; }
.pt { display: flex; align-items: center; justify-content: space-between; width: 88px; height: 23px; padding: 2px 6px 0 6px; border-right: 1px solid #bbb; color: #999; font-weight: bold; letter-spacing: .25px; }
.pt.on { width: 102px; height: 27px; padding: 0 6px 2px; border: 0; background: #fff; color: #000; letter-spacing: .4px; }
.pt svg { color: #888; margin-top: 3px; }
.pbtn { display: flex; align-items: center; gap: 10px; margin-left: auto; padding-right: 8px; color: #888; }
.pbtn em { font: bold 13px "DejaVu Sans", sans-serif; }
.ptools { display: flex; align-items: center; height: 34px; border-bottom: 2px solid #e4e4e4; color: #2c4f8c; }
.ptools span { display: flex; align-items: center; justify-content: center; width: 35px; height: 20px; border-right: 1px solid #ddd; }
.ptools .dim { color: #bbb; }
.flip svg { transform: scaleX(-1); }
.pgear { margin: 0 10px 0 auto; }
.chip { display: block; }
.chip .lab { font: 12.500px "DejaVu Sans", sans-serif; fill: #fff; text-anchor: middle; }
.chip .let { font: bold 12px "Liberation Sans", sans-serif; text-anchor: middle; }
.btabs { display: flex; height: 27px; padding: 4px 0 0 1px; }
.btabs span { width: 105px; height: 22px; padding-left: 7px; line-height: 22px; border: 1px solid #b5b5b5; border-bottom: 0; border-left-width: 0; border-radius: 0 4px 0 0; letter-spacing: .12px; }
.btabs span:first-child { width: 106px; border-left-width: 1px; border-radius: 4px 4px 0 0; }
.status { height: 19px; background: #eee; }
.desk { display: flex; position: relative; height: 49px; background: linear-gradient(rgba(40,90,100,.5), rgba(40,90,100,0) 10px), linear-gradient(90deg, #74c8d8, #7fd0de 20%, #86d3df 30%, #8ad2df 75%, #66bfd1); }
.dock { display: flex; align-items: center; width: 306px; height: 49px; margin-left: 529px; padding: 3px 4px 0; background: #232523; }
.dock svg:nth-child(2) { margin-left: 17px; }
.dock svg:nth-child(3) { margin-left: 9px; }
.dock svg:nth-child(4) { margin-left: 7px; }
.dock svg:nth-child(5) { margin-left: 5px; }
.dock svg:nth-child(6) { margin-left: 14px; }
.gram { position: absolute; right: 4px; top: 21px; height: 24px; }
.gram i { position: absolute; left: 15px; top: -4px; width: 13px; height: 13px; border-radius: 50%; background: #ffd58a; font: 10px/13px "DejaVu Sans", sans-serif; text-align: center; color: #333; }
```
FILE: chip.js
```js
// Pin map of the CPG236 package, one character per ball.
const rows = {
  A: "gtgtgtgxgxoSScBhhBg",
  B: "rtgtgtgxgxoSSghhhcr",
  C: "rgggrgGCCgCSSrhhhrg",
  D: "ttg.............ccc",
  E: "rrg.............gcc",
  F: "ggr.............rcg",
  G: "gcc...rgrrgrr...ccc",
  H: "ccr...ggrrggr...cgc",
  J: "ccc...rggrggr...ccB",
  K: "rcc...rg...rr...hcc",
  L: "Bcc...rggrgrr...hcg",
  M: "ccc...rrgrrrg...rhh",
  N: "cch...rrgrrgg...hcc",
  P: "Bgh.............hhc",
  R: "rcc.............rhc",
  T: "ccc.............ccg",
  U: "ccchcgchgCCCrcccccc",
  V: "rcchcrBhrCCCccccBgc",
  W: "gcBhhhhCCCCgccccccc"
};
// I/O banks: outline in ball units, border colour, tint.
const banks = [
  ["1,0 10,0 10,2 7,2 7,3 5,3 5,2 2,2 2,4 0,4 0,3 1,3", "#abdc08", "#333d08"],
  ["10,0 13,0 13,3 7,3 7,2 10,2", "#0b4a66", "#041a20"],
  ["13,0 19,0 19,3 13,3", "#7c0a0c", "#2a0709"],
  ["16,3 19,3 19,19 12,19 12,16 16,16", "#a05880", "#321820"],
  ["0,6 3,6 3,14 0,14", "#de10b4", "#3c0432"],
  ["0,14 3,14 3,16 8,16 8,18 7,18 7,19 0,19", "#503ca8", "#17102e"],
  ["8,16 12,16 12,19 7,19 7,18 8,18", "#0b4a66", "#041a20"],
  ["6,8 7,8 7,12 6,12", "#de10b4", "#3c0432"],
  ["7,11 8,11 8,13 6,13 6,12 7,12", "#503ca8", "#17102e"],
  ["11,9 13,9 13,12 11,12", "#a05880", "#321820"],
  ["11,6 12,6 12,7 11,7", "#0b4a66", "#041a20"],
  ["12,6 13,6 13,7 12,7", "#7c0a0c", "#2a0709"]
];
const X0 = 682.2, Y0 = 344.8, PX = 15.64, PY = 15.6;
const X = c => +(X0 + c * PX).toFixed(2), Y = r => +(Y0 + r * PY).toFixed(2);
// Outlines sit on whole pixels so that their edges stay sharp.
const SX = c => Math.round(X(c)), SY = r => Math.round(Y(r));
const inside = (pts, x, y) => {
  let hit = false;
  for (let i = 0, j = pts.length - 1; i < pts.length; j = i++) {
    const [a, b] = pts[i], [c, d] = pts[j];
    if ((b > y) !== (d > y) && x < (c - a) * (y - b) / (d - b) + a) hit = !hit;
  }
  return hit;
};
const power = (x, y, col) => `<path d="M${x - 4} ${y}h3.500M${x + 1} ${y}h4M${x - .5} ${y - 4.500}v9M${x + 1.500} ${y - 3}v6" stroke="${col}" stroke-width="1.500" fill="none"/>`;
const pin = (k, x, y) => {
  switch (k) {
    case "g": return `<path d="M${x} ${y - 4.500}v5M${x - 4.500} ${y + .8}h9M${x - 3} ${y + 2.500}h6M${x - 1.200} ${y + 4.200}h2.400" stroke="#347a1e" stroke-width="1.200"/>`;
    case "r": return power(x, y, "#b22a32");
    case "c": return `<circle cx="${x}" cy="${y}" r="6.500" fill="#8b888c"/>`;
    case "B": return `<circle cx="${x}" cy="${y}" r="6.500" fill="#8b888c"/>` + power(x, y, "#1414f5");
    case "t": return `<circle cx="${x}" cy="${y}" r="6.500" fill="#b3946a"/>`;
    case "h": case "x": return `<path d="M${x} ${y - 7}l6.600 3.400v7.200l-6.600 3.400-6.600-3.400v-7.200z" fill="${k === "h" ? "#9fd0ff" : "#b3946a"}"/>`;
    case "o": return `<path d="M${x - 6} ${y - 6}h12v12h-12z" fill="#ff6a00"/>`;
    case "G": return `<text x="${x}" y="${y + 4.500}" class="let" fill="#a09050">G</text>`;
    case "S": case "C": return `<text x="${x}" y="${y + 4.500}" class="let" fill="#f47a1a">${k}</text>`;
  }
  return "";
};
let out = '<path d="M310 321h1040v344H310z" fill="#424242"/><path d="M335 346h1015v319H335z" fill="#000"/><path d="M682 345h298v297H682z" fill="#000"/>';
const shapes = banks.map(b => b[0].split(" ").map(p => p.split(",").map(Number)));
const keys = Object.keys(rows);
keys.forEach((k, r) => [...rows[k]].forEach((ch, c) => {
  const n = shapes.findIndex(s => inside(s, c + .5, r + .5));
  if (n >= 0 && ch !== "g") out += `<rect x="${X(c)}" y="${Y(r)}" width="${PX}" height="${PY}" fill="${banks[n][2]}"/>`;
}));
for (let i = 1; i < 19; i++) out += `<path d="M${SX(i) - .5} ${Y(0)}V${Y(19)}M${X(0)} ${SY(i) - .5}H${X(19)}" stroke="#4c4c4c"/>`;
keys.forEach((k, r) => [...rows[k]].forEach((ch, c) => { out += pin(ch, +(X(c) + 7.3).toFixed(2), +(Y(r) + 7.8).toFixed(2)); }));
banks.forEach((b, i) => {
  const pts = shapes[i].map(([c, r]) => `${SX(c)},${SY(r)}`).join(" ");
  out += `<clipPath id="bank${i}"><polygon points="${pts}"/></clipPath><polygon points="${pts}" clip-path="url(#bank${i})" fill="none" stroke="${b[1]}" stroke-width="6"/>`;
});
out += '<path d="M682.500 345.500h297v296h-297z" fill="none" stroke="#fff"/>';
for (let i = 0; i < 19; i++) out += `<text class="lab" x="${X(i) + 7.3}" y="340">${i + 1}</text>`;
keys.forEach((k, r) => { out += `<text class="lab" x="322.500" y="${Y(r) + 14}">${k}</text>`; });
document.getElementById("chip").innerHTML = out;
```
